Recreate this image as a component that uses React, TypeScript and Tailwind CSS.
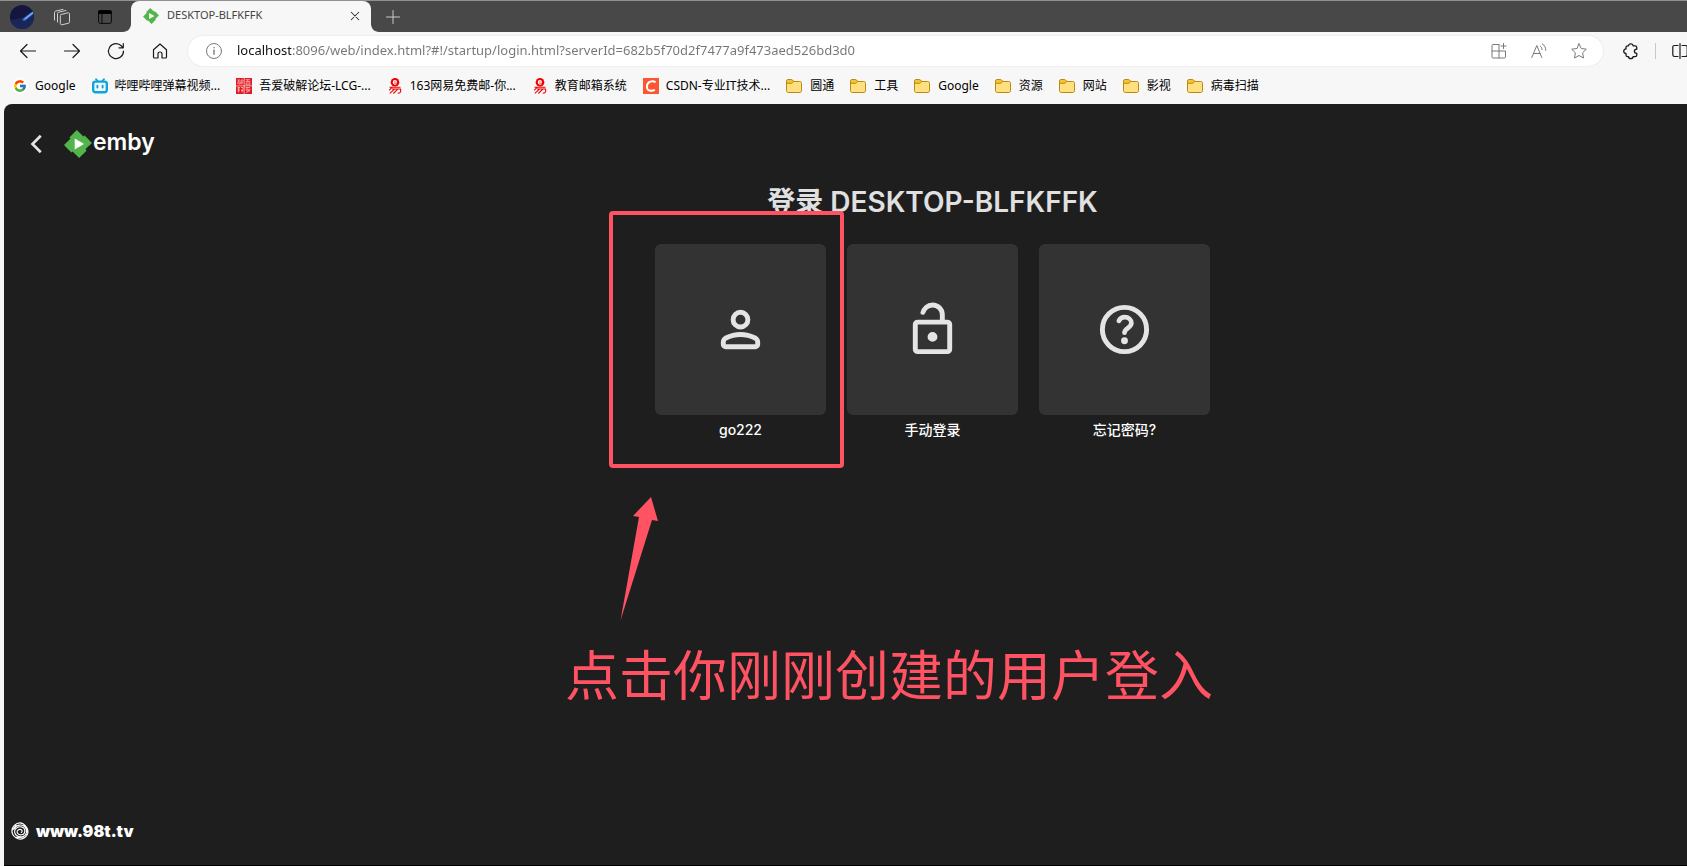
import type { ReactNode } from "react";
import { FcGoogle } from "react-icons/fc";

type Bookmark = {
  label: string;
  icon: ReactNode;
};

function EmbyMark({ className }: { className: string }) {
  return (
    <svg viewBox="0 0 24 24" className={className} aria-hidden="true">
      <path fill="#fff" d="M8 6h10v12H8z" />
      <path
        fill="#52b54b"
        d="M11.041 0c-.007 0-1.456 1.43-3.219 3.176L4.615 6.352l.512.513.512.512-2.819 2.791L0 12.961l1.83 1.848c1.006 1.016 2.438 2.46 3.182 3.209l1.351 1.359.508-.496c.28-.273.515-.498.524-.498.008 0 1.266 1.264 2.794 2.808L12.97 24l.187-.182c.23-.225 5.007-4.95 5.717-5.656l.52-.516-.502-.513c-.276-.282-.5-.52-.496-.53.003-.009 1.264-1.26 2.802-2.783 1.538-1.522 2.8-2.776 2.803-2.785.005-.012-3.617-3.684-6.107-6.193L17.65 4.6l-.505.505c-.279.278-.517.501-.53.497-.013-.005-1.27-1.267-2.793-2.805A449.655 449.655 0 0011.041 0zM9.223 7.367c.091.038 7.951 4.608 7.957 4.627.003.013-1.781 1.056-3.965 2.32a999.898 999.898 0 01-3.996 2.307c-.019.006-.026-1.266-.026-4.629 0-3.7.007-4.634.03-4.625Z"
      />
    </svg>
  );
}

function LineIcon({
  children,
  className = "size-4",
}: {
  children: ReactNode;
  className?: string;
}) {
  return (
    <svg
      viewBox="0 0 16 16"
      fill="none"
      stroke="currentColor"
      strokeLinecap="round"
      strokeLinejoin="round"
      className={`shrink-0 overflow-visible ${className}`}
      aria-hidden="true"
    >
      {children}
    </svg>
  );
}

function BiliIcon() {
  return (
    <svg viewBox="0 0 16 16" className="size-4" fill="none" stroke="#0ba6dd" strokeLinecap="round" aria-hidden="true">
      <path strokeWidth="1.800" d="M4 1.200 5.600 3M12 1.200 10.400 3" />
      <rect x="1.200" y="3.600" width="13.600" height="10.600" rx="2.200" strokeWidth="2.400" />
      <path strokeWidth="2" d="M5.400 7.800v1.600M10.600 7.800v1.600" />
    </svg>
  );
}

function SealIcon() {
  return (
    <svg viewBox="0 0 16 16" className="size-4" aria-hidden="true">
      <path fill="#e11b22" d="M0 0h16v16H0z" />
      <path
        stroke="#ffc4c0"
        strokeWidth=".7"
        fill="none"
        d="M1.500 2h2.500M2.700 2 1.700 6M2.500 4H4v2H2.500M5 2h2v1M5 2v4M5 4h2L5.200 6.500M9.500 1.700H14M9.500 3.500h5M11.700 1.700v2M10 5h4v1.800h-4zM1.500 9.500h2.500M1.500 11H4M2.500 9v5.500M1.500 12.700H4M5 9.500h2.200v2M5 12.500h2.500M6.200 11v3.500M9.500 9.500h4.500M9.500 11.300h5M10 12.800h4M10 14.500l4-2M11 9v2"
      />
      <path stroke="#fff" strokeWidth=".6" d="M8.200 0v16M0 7.900h16" />
    </svg>
  );
}

function NeteaseIcon() {
  return (
    <svg viewBox="0 0 16 16" className="size-4" fill="none" stroke="#f00000" aria-hidden="true">
      <circle cx="8" cy="4.300" r="4.300" fill="#f00000" stroke="none" />
      <path stroke="#fff" strokeWidth="1.100" d="M6.300 4.300h3.200c0-2.200-3.200-2.200-3.200 0 0 2.400 2.600 2 3.200 1.300" />
      <path strokeWidth="1.100" d="M2.500 9.300h11M5.500 8.800 2.200 12.300M5 11h8.500c.8 3-.3 4.300-2.800 4.300M7.500 11.200 2.800 15.300M10.800 11.200 6.400 15.500" />
    </svg>
  );
}

function CsdnIcon() {
  return (
    <svg viewBox="0 0 16 16" className="size-4" aria-hidden="true">
      <path fill="#fc5531" d="M0 0h16v16H0z" />
      <path
        fill="none"
        stroke="#fff"
        strokeWidth="1.900"
        d="M12.600 4.200C9.500 2.300 4.300 3.300 3.900 8.300c-.3 4.600 4.500 5.400 8 3.600"
      />
    </svg>
  );
}

function FolderIcon() {
  return (
    <svg viewBox="0 0 16 16" className="mr-px size-4" fill="none" stroke="#b88a10" aria-hidden="true">
      <path fill="#ffdf80" d="M.5 3.500h13.200c1 0 1.800.6 1.800 1.700v7.600c0 1-.7 1.700-1.700 1.700H2.200c-1 0-1.700-.7-1.700-1.700z" />
      <path fill="#f5c431" d="M.5 5.200V3c0-.9.600-1.500 1.500-1.500h3.200c.6 0 1 .2 1.400.6l1.100 1.200-1 1.300c-.4.500-.8.700-1.400.7H.5z" />
    </svg>
  );
}

const bookmarks: Bookmark[] = [
  { label: "Google", icon: <FcGoogle className="size-4 rounded-full bg-white p-px" /> },
  { label: "哔哩哔哩弹幕视频...", icon: <BiliIcon /> },
  { label: "吾爱破解论坛-LCG-...", icon: <SealIcon /> },
  { label: "163网易免费邮-你...", icon: <NeteaseIcon /> },
  { label: "教育邮箱系统", icon: <NeteaseIcon /> },
  { label: "CSDN-专业IT技术...", icon: <CsdnIcon /> },
  { label: "圆通", icon: <FolderIcon /> },
  { label: "工具", icon: <FolderIcon /> },
  { label: "Google", icon: <FolderIcon /> },
  { label: "资源", icon: <FolderIcon /> },
  { label: "网站", icon: <FolderIcon /> },
  { label: "影视", icon: <FolderIcon /> },
  { label: "病毒扫描", icon: <FolderIcon /> },
];

function TabStrip() {
  return (
    <div className="flex h-8 items-center border-t border-[#8f9090] bg-[#484848] pl-2.5">
      <button aria-label="Profile" className="size-6 shrink-0 overflow-hidden rounded-full">
        <svg viewBox="0 0 24 24" aria-hidden="true">
          <path fill="#15163f" d="M0 0h24v24H0z" />
          <path fill="#1c2c66" d="M0 16c8-4 16-2 24-6v14H0z" opacity=".7" />
          <path stroke="#2d62c4" strokeWidth="3" strokeLinecap="round" d="m14 14.500 8-6" />
          <path stroke="#7fb4f5" strokeWidth="1.200" strokeLinecap="round" d="m15 14 8-6.500" />
        </svg>
      </button>
      <button aria-label="Workspaces" className="ml-5 text-[#d2d2d2]">
        <LineIcon>
          <path d="M6.800 5.500 14 3.800c.8-.2 1.500.3 1.500 1.200v7.800c0 .8-.4 1.300-1.200 1.500l-6.500 1.500c-.9.200-1.500-.3-1.500-1.200V6.700M3.500 13V4.600c0-.8.400-1.200 1.200-1.400l7.300-1.700M.5 11V3.500c0-.8.400-1.200 1.200-1.400L9 .4" />
        </LineIcon>
      </button>
      <button aria-label="Tab actions" className="ml-7 text-black">
        <LineIcon className="size-3.5">
          <rect x=".7" y=".7" width="14.600" height="14.600" rx="2" />
          <path fill="currentColor" d="M1 1h14v3H1z" />
          <path d="M4.500 4v11" />
        </LineIcon>
      </button>
      <div className="relative ml-[19px] flex h-full w-60 items-center rounded-t-lg bg-[#f7f7f7] pr-2.5 pb-0.5 pl-3">
        {/* Flared feet of the active tab */}
        <svg viewBox="0 0 8 8" className="absolute bottom-0 -left-2 size-2 fill-[#f7f7f7]" aria-hidden="true">
          <path d="M8 0v8H0c4.400 0 8-3.600 8-8" />
        </svg>
        <svg viewBox="0 0 8 8" className="absolute -right-2 bottom-0 size-2 fill-[#f7f7f7]" aria-hidden="true">
          <path d="M0 0v8h8C3.600 8 0 4.400 0 0" />
        </svg>
        <EmbyMark className="size-4" />
        <span className="ml-2 flex-1 text-[11px] text-[#444]">DESKTOP-BLFKFFK</span>
        <button aria-label="Close tab" className="text-[#333]">
          <LineIcon className="size-3">
            <path d="m3 3 10 10M13 3 3 13" strokeWidth="1.400" />
          </LineIcon>
        </button>
      </div>
      <button aria-label="New tab" className="ml-3.5 text-[#c8c8c8]">
        <LineIcon>
          <path d="M8 1.500v13M1.500 8h13" />
        </LineIcon>
      </button>
    </div>
  );
}

function Toolbar() {
  return (
    <div className="flex items-center pt-1 pl-5 text-[#1b1b1b]">
      <div className="flex items-center gap-7">
        <button aria-label="Back">
          <LineIcon>
            <path strokeWidth="1.200" d="M.5 8h15M7 1.500.5 8 7 14.500" />
          </LineIcon>
        </button>
        <button aria-label="Forward">
          <LineIcon>
            <path strokeWidth="1.200" d="M.5 8h15M9 1.500 15.500 8 9 14.500" />
          </LineIcon>
        </button>
        <button aria-label="Refresh">
          <LineIcon>
            <path strokeWidth="1.200" d="M15.500 8A7.500 7.500 0 1 1 13.500 3l1.500 1.700M15.300.5v4.300h-4.300" />
          </LineIcon>
        </button>
        <button aria-label="Home">
          <LineIcon>
            <path strokeWidth="1.200" d="M1.500 6.800 8 1l6.500 5.800V14c0 .6-.4 1-1 1H10v-4c0-2.700-4-2.700-4 0v4H2.500c-.6 0-1-.4-1-1z" />
          </LineIcon>
        </button>
      </div>

      <div className="ml-5 flex h-[30px] flex-1 items-center rounded-full bg-white pr-4 pl-[18px] text-[#7a7a7a] shadow-[0_0_2px_rgba(0,0,0,0.12)]">
        <button aria-label="Site information">
          <LineIcon>
            <circle cx="8" cy="8" r="7.500" />
            <path d="M8 7.200v4" strokeWidth="1.400" />
            <path d="M8 4.700v.1" strokeWidth="1.600" />
          </LineIcon>
        </button>
        <input
          aria-label="Address"
          spellCheck={false}
          defaultValue="localhost:8096/web/index.html?#!/startup/login.html?serverId=682b5f70d2f7477a9f473aed526bd3d0"
          className="ml-[15px] min-w-0 flex-1 bg-[linear-gradient(to_right,#111_54px,#757575_54px)] bg-clip-text text-[13px] text-transparent outline-none"
        />
        <div className="flex items-center gap-6">
          <button aria-label="Apps">
            <LineIcon>
              <path d="M8 1.500H2c-.6 0-1 .4-1 1V14c0 .6.400 1 1 1h11.500c.6 0 1-.4 1-1V8H1M8 1.500V15M12.500.5v5M10 3h5" />
            </LineIcon>
          </button>
          <button aria-label="Read aloud">
            <LineIcon>
              <path d="m.8 14.500 5-12 5 12M2.500 10.500h6.600M9.500 3.200c1 .8 1.500 2 1.500 3.500M11.300.8c2.300 1.400 3.500 3.700 3.500 6.500" />
            </LineIcon>
          </button>
          <button aria-label="Favorite">
            <LineIcon>
              <path d="m8 .8 2.200 4.700 5.100.7-3.700 3.600.9 5.200L8 12.500 3.500 15l.9-5.200L.7 6.200l5.100-.7z" />
            </LineIcon>
          </button>
        </div>
      </div>

      <button aria-label="Extensions" className="ml-5">
        <LineIcon>
          <path strokeWidth="1.300" d="M5.500 2.800c.3-2.700 4.300-2.700 4.600 0h2c1 0 1.700.7 1.700 1.700v1.700c-3.200.2-3.200 4 0 4.200v1.500c0 1-.7 1.700-1.700 1.700h-2c-.3 2.700-4.300 2.700-4.600 0h-.8c-1 0-1.700-.7-1.700-1.700v-1.400c-3-.3-3-4.300 0-4.600V4.500c0-1 .7-1.700 1.700-1.700z" />
        </LineIcon>
      </button>
      <span className="ml-4 h-4 w-px bg-[#c8c8c8]" />
      <button aria-label="Split screen" className="-mr-px ml-4">
        <LineIcon>
          <path strokeWidth="1.200" d="M6 2.500H2.500c-1 0-1.700.7-1.700 1.700v7.600c0 1 .7 1.700 1.700 1.700H6M10 2.500h3.500c1 0 1.700.7 1.700 1.700v7.600c0 1-.7 1.700-1.700 1.700H10M8 .5v15" />
        </LineIcon>
      </button>
    </div>
  );
}

function BookmarkBar() {
  return (
    <nav className="flex h-[38px] items-center gap-4 pt-0.5 pl-3 text-xs text-black">
      {bookmarks.map((item, i) => (
        <a key={i} href="#" className="flex items-center gap-[7px] whitespace-nowrap">
          {item.icon}
          {item.label}
        </a>
      ))}
    </nav>
  );
}

const loginCards: Bookmark[] = [
  {
    label: "go222",
    icon: (
      <svg viewBox="0 -960 960 960" className="size-[59px]" fill="currentColor" aria-hidden="true">
        <path d="M480-480q-66 0-113-47t-47-113q0-66 47-113t113-47q66 0 113 47t47 113q0 66-47 113t-113 47ZM160-240v-32q0-34 17.500-62.500T224-378q62-31 126-46.500T480-440q66 0 130 15.500T736-378q29 15 46.500 43.500T800-272v32q0 33-23.500 56.500T720-160H240q-33 0-56.500-23.500T160-240Zm80 0h480v-32q0-11-5.500-20T700-306q-54-27-109-40.500T480-360q-56 0-111 13.500T260-306q-9 5-14.500 14t-5.500 20v32Zm240-320q33 0 56.500-23.500T560-640q0-33-23.500-56.500T480-720q-33 0-56.500 23.500T400-640q0 33 23.500 56.500T480-560Z" />
      </svg>
    ),
  },
  {
    label: "手动登录",
    icon: (
      <svg viewBox="0 -960 960 960" className="size-[59px]" fill="currentColor" aria-hidden="true">
        <path d="M240-160h480v-400H240v400Zm240-120q33 0 56.500-23.500T560-360q0-33-23.500-56.500T480-440q-33 0-56.500 23.500T400-360q0 33 23.500 56.500T480-280ZM240-80q-33 0-56.500-23.500T160-160v-400q0-33 23.500-56.500T240-640h360v-80q0-50-35-85t-85-35q-42 0-73.500 25.500T364-751q-4 14-16.500 22.500T320-720q-17 0-28.500-11T284-756q14-69 69-116.500T480-920q83 0 141.500 58.500T680-720v80h40q33 0 56.500 23.500T800-560v400q0 33-23.500 56.500T720-80H240Z" />
      </svg>
    ),
  },
  {
    label: "忘记密码?",
    icon: (
      <svg viewBox="0 0 24 24" className="size-[59px]" fill="none" stroke="currentColor" strokeLinecap="round" aria-hidden="true">
        <circle cx="12" cy="12" r="9" strokeWidth="2" />
        <path strokeWidth="1.900" d="M9.700 8.500c.5-1 1.300-1.500 2.400-1.500 1.600 0 2.700 1 2.700 2.400 0 1.900-2.800 2.200-2.800 3.900" />
        <circle cx="12" cy="16.600" r="1.400" fill="currentColor" stroke="none" />
      </svg>
    ),
  },
];

export default function App() {
  return (
    <div className="flex min-h-screen flex-col overflow-hidden bg-[#f7f7f7] font-['Noto_Sans','Noto_Sans_CJK_SC',sans-serif]">
      <TabStrip />
      <Toolbar />
      <BookmarkBar />

      <main className="ml-1 flex flex-1 flex-col rounded-tl-lg bg-[#1e1e1e] font-['Inter','Noto_Sans_CJK_SC',sans-serif] text-[#e4e4e4]">
        <header className="flex items-center pt-6 pl-[27px]">
          <button aria-label="返回" className="mr-[21px]">
            <LineIcon className="h-8 w-3">
              <path d="M13-3 2 8l11 11" strokeWidth="3.600" strokeLinecap="butt" strokeLinejoin="miter" />
            </LineIcon>
          </button>
          <a href="#" className="flex items-center text-[23px] leading-7 font-semibold text-white">
            <EmbyMark className="size-7" />
            <span className="pb-1 pl-px">emby</span>
          </a>
        </header>

        <div className="flex justify-center pt-5 pl-[174px]">
          <section className="relative">
            <h1 className="pt-1 text-center text-[28px] leading-9 font-semibold text-[#e0e0e0]">
              登录 DESKTOP-BLFKFFK
            </h1>
            <div className="mt-6 flex gap-[21px]">
              {loginCards.map((card) => (
                <button key={card.label} className="flex w-[171px] flex-col items-center">
                  <span className="flex h-[171px] w-full items-center justify-center rounded-md bg-[#333]">
                    {card.icon}
                  </span>
                  <span className="mt-1 text-sm leading-[22px] font-medium text-white">
                    {card.label}
                  </span>
                </button>
              ))}
            </div>

            {/* Tutorial markup drawn over the page */}
            <div className="pointer-events-none absolute top-[31px] -left-[46px] h-[257px] w-[235px] rounded border-4 border-[#ff5263]" />
            <svg
              viewBox="0 0 38 124"
              className="absolute top-[317px] -left-[35px] w-[38px] fill-[#ff5263]"
              aria-hidden="true"
            >
              <path d="m31 0 7 24-6-1L.5 123.500 19 20l-6-1z" />
            </svg>
            <p className="absolute top-[457px] -left-[90px] text-[54px] leading-[80px] whitespace-nowrap text-[#ff5263]">
              点击你刚刚创建的用户登入
            </p>
          </section>
        </div>

        <footer className="mt-auto flex items-center gap-[7px] border-b border-black pb-[22px] pl-[7px] text-white">
          <LineIcon className="size-[18px]">
            <path d="M8 .8c3 0 4 1.500 5.500 3.500S15.600 8 14.800 10.500 11 15 8.500 15.200 2.500 13.700 1.300 10.500 1.500 4.500 3 3 6 .8 8 .8M3 6c1.500-3.500 7-4.500 9.500-1.500S14 12 10.500 13 3.500 12 3.200 9 6 4 9 4.300s3.800 3 3 5.200S7.500 12 6 10.300 6 6.500 8 6.500s2.500 2 1.200 2.800M1.500 7l3-4M14.500 7l-3-5M4 13.500l5 .2M13.500 11l-3 2.500" />
          </LineIcon>
          <span className="text-base leading-6 font-black">www.98t.tv</span>
        </footer>
      </main>
    </div>
  );
}
